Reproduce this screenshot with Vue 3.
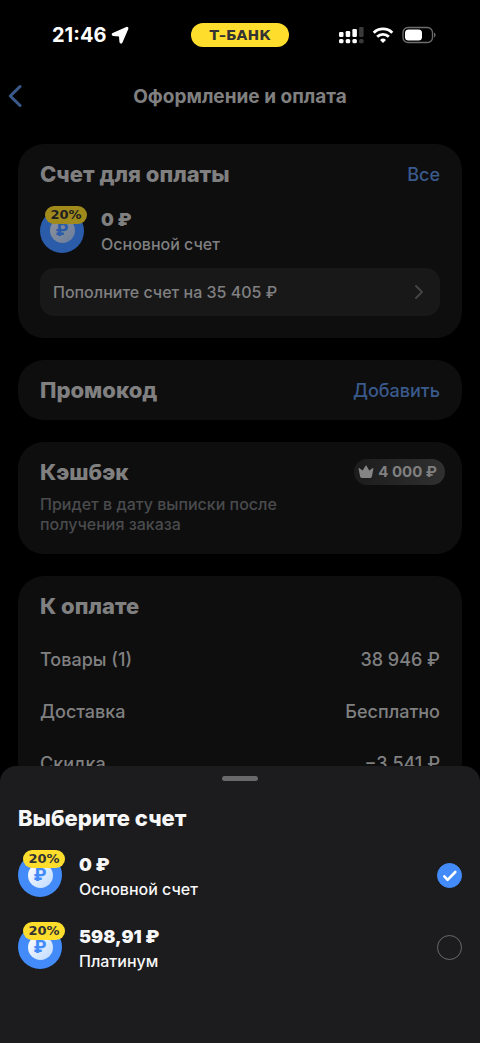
<script setup>
import { ref } from 'vue'

const accounts = [
  { id: 'main', amount: '0 ₽', name: 'Основной счет' },
  { id: 'platinum', amount: '598,91 ₽', name: 'Платинум' },
]
const selected = ref('main')

const totals = [
  { label: 'Товары (1)', value: '38 946 ₽' },
  { label: 'Доставка', value: 'Бесплатно' },
  { label: 'Скидка', value: '−3 541 ₽' },
]
</script>

<template>
  <div class="screen">
    <div class="status">
      <div class="clock">
        <span>21:46</span>
        <svg width="18" height="18" viewBox="0 0 18 18" aria-hidden="true">
          <path d="M15.600 1.700 2 7.600c-.9.500-.7 1.500.3 1.600l5.800.5c.4 0 .6.200.6.600l.5 5.700c.1 1 1.200 1.200 1.600.3L16.600 2.700c.3-.7-.3-1.300-1-1Z" fill="#fff" stroke="#fff" stroke-width="1.500" stroke-linejoin="round" />
        </svg>
      </div>
      <div class="bank">Т–БАНК</div>
      <div class="signals">
        <svg width="25" height="18" viewBox="0 0 25 18" aria-hidden="true">
          <g fill="#fff">
            <rect x="0" y="6" width="4.500" height="5" rx="1.200" />
            <rect x="6.700" y="5" width="4.500" height="6" rx="1.200" />
            <rect x="13.400" y="3" width="4.500" height="8" rx="1.200" />
            <rect x="0" y="13" width="4.500" height="4.300" rx="1.500" />
            <rect x="6.700" y="13" width="4.500" height="4.300" rx="1.500" />
            <rect x="13.400" y="13" width="4.500" height="4.300" rx="1.500" />
          </g>
          <g fill="#3a3a3c">
            <rect x="20.100" y="1" width="4.500" height="10" rx="1.200" />
            <rect x="20.100" y="13" width="4.500" height="4.300" rx="1.500" />
          </g>
        </svg>
        <svg width="22" height="18" viewBox="0 0 22 18" fill="none" stroke="#fff" stroke-width="2.900" aria-hidden="true">
          <path d="M1.700 6.700a13.300 13.300 0 0 1 18.600 0" />
          <path d="M5.200 10.700a8.300 8.300 0 0 1 11.600 0" />
          <path d="m11 17-3-3.100a4.300 4.300 0 0 1 6 0Z" fill="#fff" stroke="none" />
        </svg>
        <svg width="34" height="18" viewBox="0 0 34 18" aria-hidden="true">
          <rect x="1" y="1.500" width="29.500" height="15" rx="5" fill="none" stroke="#6d6d6d" stroke-width="1.300" />
          <rect x="3" y="3.500" width="17" height="11" rx="3.500" fill="#fff" />
          <path d="M32 6.500c2 .7 2 4.300 0 5Z" fill="#6d6d6d" />
        </svg>
      </div>
    </div>

    <header class="nav">
      <button class="back" type="button" aria-label="Назад">
        <svg width="14" height="24" viewBox="0 0 14 24" fill="none" aria-hidden="true">
          <path d="M12 2.500 2.300 12l9.700 9.500" stroke="#3a5a8c" stroke-width="3" stroke-linecap="round" stroke-linejoin="round" />
        </svg>
      </button>
      <h1>Оформление и оплата</h1>
    </header>

    <main class="cards">
      <section class="card pay">
        <div class="head">
          <h2>Счет для оплаты</h2>
          <a href="#">Все</a>
        </div>
        <div class="account dim">
          <span class="coin"><span class="core">₽</span><span class="percent">20%</span></span>
          <span class="info"><b>0 ₽</b><span>Основной счет</span></span>
        </div>
        <button class="topup" type="button">
          <span>Пополните счет на 35 405 ₽</span>
          <svg width="10" height="16" viewBox="0 0 10 16" fill="none" aria-hidden="true">
            <path d="m2 2 6 6-6 6" stroke="#444445" stroke-width="2" stroke-linecap="round" stroke-linejoin="round" />
          </svg>
        </button>
      </section>

      <section class="card">
        <div class="head">
          <h2>Промокод</h2>
          <a href="#">Добавить</a>
        </div>
      </section>

      <section class="card cashback">
        <div class="head">
          <h2>Кэшбэк</h2>
          <span class="bonus">
            <svg width="16" height="14" viewBox="0 0 16 14" aria-hidden="true">
              <path d="M.6 3.800c-.1-.7.4-.9.9-.5l3.200 2.300L7.400 1c.3-.6.900-.6 1.200 0l2.700 4.600 3.200-2.300c.5-.4 1-.2.900.5l-1.500 7.800c-.2.900-.7 1.300-1.600 1.300H3.700c-.9 0-1.400-.4-1.600-1.300Z" fill="#858586" />
            </svg>
            4 000 ₽
          </span>
        </div>
        <p>Придет в дату выписки после получения заказа</p>
      </section>

      <section class="card">
        <div class="head">
          <h2>К оплате</h2>
        </div>
        <dl>
          <div v-for="row in totals" :key="row.label" class="total">
            <dt>{{ row.label }}</dt>
            <dd>{{ row.value }}</dd>
          </div>
        </dl>
      </section>
    </main>

    <section class="sheet" role="dialog" aria-labelledby="sheet-title">
      <div class="handle"></div>
      <h2 id="sheet-title">Выберите счет</h2>
      <label v-for="item in accounts" :key="item.id" class="account option" :for="item.id">
        <span class="coin"><span class="core">₽</span><span class="percent">20%</span></span>
        <span class="info"><b>{{ item.amount }}</b><span>{{ item.name }}</span></span>
        <span class="choice">
          <input :id="item.id" v-model="selected" type="radio" name="account" :value="item.id" />
          <svg v-if="selected === item.id" width="25" height="25" viewBox="0 0 25 25" fill="none" aria-hidden="true">
            <path d="m7.300 13.400 3.300 3.400L18.300 9" stroke="#fff" stroke-width="2.600" stroke-linecap="round" stroke-linejoin="round" />
          </svg>
        </span>
      </label>
    </section>
  </div>
</template>

<style>
body {
  background: #000;
}
</style>

<style scoped>
.screen {
  position: relative;
  height: 100vh;
  overflow: hidden;
  background: #000;
  color: #808081;
  font-family: Inter, "Liberation Sans", sans-serif;
}
h1,
h2,
p,
dl,
dd {
  margin: 0;
}
button {
  border: 0;
  padding: 0;
  font: inherit;
  color: inherit;
}
svg {
  display: block;
  flex: none;
}
.status {
  display: grid;
  grid-template-columns: 1fr auto 1fr;
  align-items: center;
  height: 70px;
  padding: 0 44px;
}
.clock {
  display: flex;
  align-items: center;
  gap: 5px;
  padding-left: 8px;
  color: #fff;
  font-size: 20px;
  font-weight: 700;
}
.bank {
  padding: 0 18px;
  border-radius: 12px;
  background: #ffdd2d;
  color: #333;
  font: 700 14px/24px "DejaVu Sans", sans-serif;
}
.signals {
  display: flex;
  justify-content: flex-end;
  align-items: center;
  gap: 8px;
}
.nav {
  display: grid;
  grid-template-columns: 24px 1fr 24px;
  align-items: center;
  height: 52px;
  padding: 0 8px;
}
.back {
  background: none;
}
h1 {
  text-align: center;
  font-size: 19px;
  font-weight: 700;
}
.cards {
  display: flex;
  flex-direction: column;
  gap: 22px;
  padding: 22px 18px 0;
}
.card {
  padding: 0 22px;
  border-radius: 26px;
  background: #0e0e0f;
}
.head {
  display: flex;
  align-items: center;
  justify-content: space-between;
  height: 60px;
}
h2 {
  font-size: 22px;
  line-height: 28px;
  font-weight: 800;
}
a {
  color: #3a5a8c;
  font-size: 18px;
  font-weight: 500;
  text-decoration: none;
}
.pay {
  padding-bottom: 22px;
}
.account {
  display: flex;
  align-items: center;
  gap: 17px;
}
.coin {
  position: relative;
  display: grid;
  place-items: center;
  width: 44px;
  height: 44px;
  border-radius: 50%;
  background: #428bf9;
}
.core {
  width: 25px;
  height: 25px;
  border-radius: 50%;
  background: linear-gradient(135deg, #fff, #bed9ff);
  color: #428bf9;
  text-align: center;
  font-size: 17px;
  line-height: 25px;
  font-weight: 800;
}
.percent {
  position: absolute;
  top: -3px;
  left: 5px;
  width: 42px;
  border-radius: 9px;
  background: #ffdd2d;
  color: #333;
  text-align: center;
  font: 700 13px/18px "DejaVu Sans", sans-serif;
}
.info {
  display: flex;
  flex-direction: column;
  flex: 1;
  padding-top: 3px;
  font-size: 16px;
  line-height: 25px;
  font-weight: 500;
}
.info b {
  font-size: 18px;
  font-weight: 900;
}
.dim {
  margin-bottom: 11px;
}
.dim .coin {
  background: #2a5caa;
}
.dim .core {
  background: linear-gradient(135deg, #8c929b, #6c7e9c);
  color: #2a5caa;
}
.dim .percent {
  background: #a08a1c;
  color: #202020;
}
.topup {
  display: flex;
  align-items: center;
  justify-content: space-between;
  width: 100%;
  height: 48px;
  padding: 0 16px 0 13px;
  border-radius: 14px;
  background: #181819;
  font-size: 16px;
  font-weight: 500;
}
.cashback {
  padding-bottom: 20px;
}
.cashback p {
  max-width: 270px;
  margin-top: -8px;
  color: #4a4b4d;
  font-size: 16px;
  line-height: 20px;
  font-weight: 500;
}
.bonus {
  display: flex;
  align-items: center;
  gap: 4px;
  margin-right: -5px;
  padding: 0 8px 0 4px;
  border-radius: 13px;
  background: linear-gradient(90deg, #1c1c1d, #303031);
  font-size: 15px;
  line-height: 26px;
  font-weight: 700;
}
dl {
  margin-top: -3px;
}
.total {
  display: flex;
  justify-content: space-between;
  align-items: center;
  height: 52px;
  font-size: 18px;
  font-weight: 500;
}
.sheet {
  position: absolute;
  right: 0;
  bottom: 0;
  left: 0;
  padding: 10px 18px 60px;
  border-radius: 16px 16px 0 0;
  background: #1c1c1e;
  color: #f7f7f8;
}
.handle {
  width: 36px;
  height: 5px;
  margin: 0 auto 23px;
  border-radius: 3px;
  background: #69696b;
}
.sheet h2 {
  margin-bottom: 7px;
}
.option {
  height: 72px;
  cursor: pointer;
}
.choice {
  position: relative;
  width: 25px;
  height: 25px;
}
.choice input {
  display: block;
  appearance: none;
  width: 25px;
  height: 25px;
  margin: 0;
  border: 1px solid #69696b;
  border-radius: 50%;
}
.choice input:checked {
  border-color: #428bf9;
  background: #428bf9;
}
.choice svg {
  position: absolute;
  top: 0;
  left: 0;
  pointer-events: none;
}
</style>
